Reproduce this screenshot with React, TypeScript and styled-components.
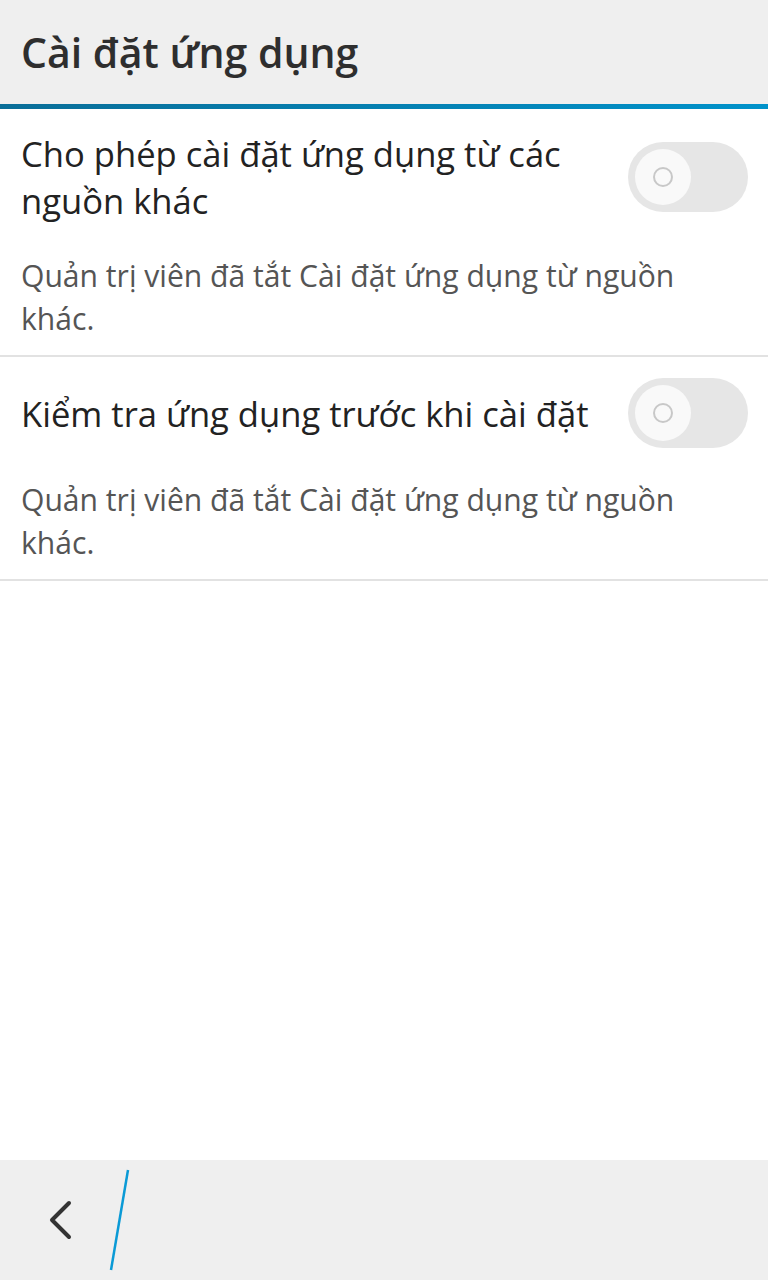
import React from 'react'
import styled, { createGlobalStyle } from 'styled-components'

const GlobalStyle = createGlobalStyle`
  html, body {
    margin: 0;
    padding: 0;
    background: #ffffff;
  }
  body {
    font-family: "Open Sans", Lato, "Liberation Sans", sans-serif;
  }
`

const Screen = styled.div`
  width: 768px;
  height: 1280px;
  display: flex;
  flex-direction: column;
  background: #ffffff;
`

const Header = styled.header`
  height: 104px;
  background: #efefef;
  display: flex;
  align-items: center;
  padding-left: 21px;
`

const Title = styled.h1`
  margin: 0;
  font-size: 41px;
  font-weight: 600;
  color: #2e2e2e;
`

const AccentLine = styled.div`
  height: 5px;
  background: linear-gradient(90deg, #0a6e98, #0092ca);
`

const Content = styled.main`
  flex: 1;
`

const Item = styled.section`
  padding: 21px 20px 15px 21px;
  border-bottom: 2px solid #e2e2e2;
`

const TopRow = styled.div`
  display: flex;
  align-items: center;
  justify-content: space-between;
`

const ItemTitle = styled.div`
  width: 590px;
  font-size: 34.6px;
  line-height: 47px;
  color: #222;
`

const Desc = styled.p`
  margin: 30px 0 0;
  max-width: 690px;
  font-size: 30.1px;
  line-height: 43px;
  color: #555;
`

const Track = styled.div`
  width: 120px;
  height: 70px;
  border-radius: 35px;
  background: #e6e6e6;
  display: flex;
  align-items: center;
  padding-left: 7px;
  box-sizing: border-box;
  flex-shrink: 0;
`

const Knob = styled.div`
  width: 56px;
  height: 56px;
  border-radius: 50%;
  background: #f9f9f9;
  display: flex;
  align-items: center;
  justify-content: center;
`

const KnobRing = styled.div`
  width: 16px;
  height: 16px;
  border-radius: 50%;
  border: 2px solid #c8c8c8;
`

const BottomBar = styled.footer`
  height: 120px;
  background: #efefef;
  display: flex;
  align-items: center;
`

const BackButton = styled.div`
  width: 112px;
  height: 120px;
  display: flex;
  align-items: center;
  padding-left: 47px;
  box-sizing: border-box;
`

const Toggle = () => (
  <Track>
    <Knob>
      <KnobRing />
    </Knob>
  </Track>
)

const items = [
  {
    title: 'Cho phép cài đặt ứng dụng từ các nguồn khác',
    desc: 'Quản trị viên đã tắt Cài đặt ứng dụng từ nguồn khác.',
  },
  {
    title: 'Kiểm tra ứng dụng trước khi cài đặt',
    desc: 'Quản trị viên đã tắt Cài đặt ứng dụng từ nguồn khác.',
  },
]

const App = () => {
  return (
    <Screen>
      <GlobalStyle />
      <Header>
        <Title>Cài đặt ứng dụng</Title>
      </Header>
      <AccentLine />
      <Content>
        {items.map((item) => (
          <Item key={item.title}>
            <TopRow>
              <ItemTitle>{item.title}</ItemTitle>
              <Toggle />
            </TopRow>
            <Desc>{item.desc}</Desc>
          </Item>
        ))}
      </Content>
      <BottomBar>
        <BackButton>
          <svg width="26" height="40" viewBox="0 0 26 40">
            <polyline points="22,3 5,20 22,37" fill="none" stroke="#333" strokeWidth="4" strokeLinecap="round" strokeLinejoin="round" />
          </svg>
        </BackButton>
        <svg width="24" height="120" viewBox="0 0 24 120" style={{ marginLeft: -4 }}>
          <line x1="20" y1="10" x2="3" y2="110" stroke="#0a9ad6" strokeWidth="2.5" />
        </svg>
      </BottomBar>
    </Screen>
  )
}

export default App
